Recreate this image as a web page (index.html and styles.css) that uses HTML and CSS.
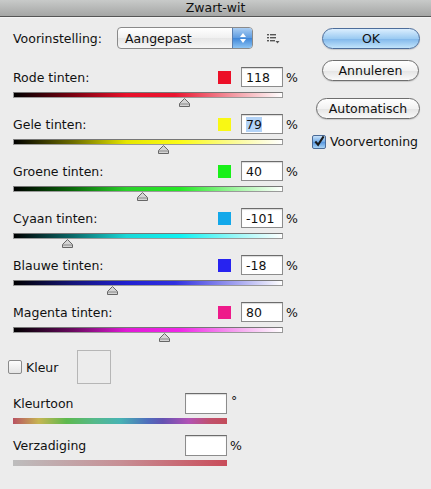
FILE: index.html
```html
<!DOCTYPE html>
<html lang="nl">
<head>
    <meta charset="UTF-8">
    <meta name="viewport" content="width=device-width, initial-scale=1.0">
    <title>Zwart-wit</title>
    <link rel="stylesheet" href="styles.css">
</head>
<body>

<div class="titlebar">Zwart-wit</div>

<div class="dialog">
    <div class="main">
        <div class="preset">
            <span class="preset-label">Voorinstelling:</span>
            <div class="select">
                <span class="select-text">Aangepast</span>
                <span class="stepper">
                    <svg width="8" height="12" viewBox="0 0 8 12"><path d="M4 1 L7 5 L1 5 Z M4 11 L7 7 L1 7 Z" fill="#fff"/></svg>
                </span>
            </div>
            <svg class="menu-icon" width="13" height="11" viewBox="0 0 13 11">
                <rect x="0" y="1" width="2" height="1.4" fill="#555"/>
                <rect x="3" y="1" width="6" height="1.4" fill="#555"/>
                <rect x="0" y="4" width="2" height="1.4" fill="#555"/>
                <rect x="3" y="4" width="6" height="1.4" fill="#555"/>
                <rect x="0" y="7" width="2" height="1.4" fill="#555"/>
                <rect x="3" y="7" width="5" height="1.4" fill="#555"/>
                <path d="M8.5 8 L12.5 8 L10.5 10.5 Z" fill="#555"/>
            </svg>
        </div>

        <!-- kleurkanalen -->
        <div class="tint">
            <div class="tint-head">
                <span class="tint-label">Rode tinten:</span>
                <span class="swatch red"></span>
                <span class="field">118</span>
                <span class="unit">%</span>
            </div>
            <div class="track">
                <div class="bar bar-red"></div>
                <svg class="thumb" style="left: 166px" width="11" height="9" viewBox="0 0 11 9"><path d="M0.5 8.5 L0.5 5.5 L5.5 0.5 L10.5 5.5 L10.5 8.5 Z" fill="#d4d4d4" stroke="#666"/><path d="M1 6 L10 6" stroke="#888"/></svg>
            </div>
        </div>
        <div class="tint">
            <div class="tint-head">
                <span class="tint-label">Gele tinten:</span>
                <span class="swatch yellow"></span>
                <span class="field"><span class="selected">79</span></span>
                <span class="unit">%</span>
            </div>
            <div class="track">
                <div class="bar bar-yellow"></div>
                <svg class="thumb" style="left: 145px" width="11" height="9" viewBox="0 0 11 9"><path d="M0.5 8.5 L0.5 5.5 L5.5 0.5 L10.5 5.5 L10.5 8.5 Z" fill="#d4d4d4" stroke="#666"/><path d="M1 6 L10 6" stroke="#888"/></svg>
            </div>
        </div>
        <div class="tint">
            <div class="tint-head">
                <span class="tint-label">Groene tinten:</span>
                <span class="swatch green"></span>
                <span class="field">40</span>
                <span class="unit">%</span>
            </div>
            <div class="track">
                <div class="bar bar-green"></div>
                <svg class="thumb" style="left: 124px" width="11" height="9" viewBox="0 0 11 9"><path d="M0.5 8.5 L0.5 5.5 L5.5 0.5 L10.5 5.5 L10.5 8.5 Z" fill="#d4d4d4" stroke="#666"/><path d="M1 6 L10 6" stroke="#888"/></svg>
            </div>
        </div>
        <div class="tint">
            <div class="tint-head">
                <span class="tint-label">Cyaan tinten:</span>
                <span class="swatch cyan"></span>
                <span class="field">-101</span>
                <span class="unit">%</span>
            </div>
            <div class="track">
                <div class="bar bar-cyan"></div>
                <svg class="thumb" style="left: 49px" width="11" height="9" viewBox="0 0 11 9"><path d="M0.5 8.5 L0.5 5.5 L5.5 0.5 L10.5 5.5 L10.5 8.5 Z" fill="#d4d4d4" stroke="#666"/><path d="M1 6 L10 6" stroke="#888"/></svg>
            </div>
        </div>
        <div class="tint">
            <div class="tint-head">
                <span class="tint-label">Blauwe tinten:</span>
                <span class="swatch blue"></span>
                <span class="field">-18</span>
                <span class="unit">%</span>
            </div>
            <div class="track">
                <div class="bar bar-blue"></div>
                <svg class="thumb" style="left: 94px" width="11" height="9" viewBox="0 0 11 9"><path d="M0.5 8.5 L0.5 5.5 L5.5 0.5 L10.5 5.5 L10.5 8.5 Z" fill="#d4d4d4" stroke="#666"/><path d="M1 6 L10 6" stroke="#888"/></svg>
            </div>
        </div>
        <div class="tint">
            <div class="tint-head">
                <span class="tint-label">Magenta tinten:</span>
                <span class="swatch magenta"></span>
                <span class="field">80</span>
                <span class="unit">%</span>
            </div>
            <div class="track">
                <div class="bar bar-magenta"></div>
                <svg class="thumb" style="left: 146px" width="11" height="9" viewBox="0 0 11 9"><path d="M0.5 8.5 L0.5 5.5 L5.5 0.5 L10.5 5.5 L10.5 8.5 Z" fill="#d4d4d4" stroke="#666"/><path d="M1 6 L10 6" stroke="#888"/></svg>
            </div>
        </div>

        <!-- kleur -->
        <div class="colorize">
            <span class="checkbox"></span>
            <span class="colorize-label">Kleur</span>
            <span class="color-box"></span>
        </div>
        <div class="tone">
            <div class="tone-head">
                <span class="tone-label">Kleurtoon</span>
                <span class="field tone-field"></span>
                <span class="degree">°</span>
            </div>
            <div class="bar bar-hue"></div>
        </div>
        <div class="tone">
            <div class="tone-head">
                <span class="tone-label">Verzadiging</span>
                <span class="field tone-field"></span>
                <span class="tone-unit">%</span>
            </div>
            <div class="bar bar-sat"></div>
        </div>
    </div>

    <div class="side">
        <button class="btn btn-default">OK</button>
        <button class="btn btn-cancel">Annuleren</button>
        <button class="btn btn-auto">Automatisch</button>
        <label class="preview">
            <span class="checkbox checked">
                <svg width="13" height="13" viewBox="0 0 13 13"><path d="M2.5 6.5 L5.5 10 L11.5 1" fill="none" stroke="#1a1a1a" stroke-width="2.2"/></svg>
            </span>
            Voorvertoning
        </label>
    </div>
</div>

</body>
</html>
```

FILE: styles.css
```css
body {
    font-family: "DejaVu Sans", "Lucida Grande", sans-serif;
    font-size: 12px;
    color: #111;
    margin: 0;
    padding: 0;
    background-color: #ececec;
    width: 431px;
    height: 489px;
    overflow: hidden;
}
.titlebar {
    height: 16px;
    line-height: 15px;
    text-align: center;
    font-size: 12.5px;
    color: #111;
    background: linear-gradient(#c8cac9, #a5a6a5);
    border-bottom: 1px solid #555;
    box-shadow: 0 1px 0 #f4f4f4;
}
.dialog {
    display: flex;
    padding: 10px 11px 0 13px;
}
.main {
    width: 282px;
}
.preset {
    display: flex;
    align-items: center;
    height: 22px;
    margin-bottom: 18px;
}
.preset-label {
    width: 104px;
    font-size: 12.5px;
}
.select {
    display: flex;
    align-items: center;
    width: 134px;
    height: 20px;
    border: 1px solid #8a8a8a;
    border-radius: 4px;
    background: linear-gradient(#ffffff, #f0f0f0 50%, #e6e6e6 51%, #f6f6f6);
    overflow: hidden;
}
.select-text {
    flex: 1;
    padding-left: 7px;
    font-size: 12.5px;
}
.stepper {
    display: flex;
    align-items: center;
    justify-content: center;
    width: 19px;
    height: 20px;
    border-left: 1px solid #5a7fb0;
    background: linear-gradient(#a9cdf3, #5d9be0 50%, #3f86d8 51%, #8cc4f4);
}
.menu-icon {
    margin-left: 14px;
}
.tint {
    height: 47px;
}
.tint-head,
.tone-head {
    display: flex;
    align-items: center;
    height: 20px;
}
.tint-label,
.tone-label {
    flex: 1;
    font-size: 12.5px;
}
.swatch {
    width: 13px;
    height: 13px;
    margin-right: 10px;
}
.red { background: #ec0f27; }
.yellow { background: #f9f814; }
.green { background: #18f018; }
.cyan { background: #13a8ea; }
.blue { background: #2723f0; }
.magenta { background: #ee1a8a; }
.field {
    box-sizing: border-box;
    width: 42px;
    height: 20px;
    padding: 2px 4px 0;
    background: #fff;
    border: 1px solid #8c8c8c;
    border-top-color: #6c6c6c;
    box-shadow: inset 0 1px 1px rgba(0, 0, 0, 0.15);
    font-size: 12.5px;
    line-height: 16px;
}
.selected {
    background: #b3d3f7;
}
.unit {
    width: 9px;
    margin-left: 3px;
    font-size: 12.5px;
}
.track {
    position: relative;
    margin-top: 5px;
}
.bar {
    box-sizing: border-box;
    width: 270px;
    height: 6px;
    border: 1px solid #9a9a9a;
    border-top-color: #777;
}
.thumb {
    position: absolute;
    top: 6px;
}
.bar-red { background: linear-gradient(to right, #000, #7a0010 22%, #e8102a 42%, #ea1530 60%, #f39aa3 82%, #fff); }
.bar-yellow { background: linear-gradient(to right, #000, #6c6c00 22%, #e6e600 42%, #fbfb18 62%, #fbfba0 84%, #fff); }
.bar-green { background: linear-gradient(to right, #000, #0a6a0a 22%, #2ad02a 42%, #26e826 62%, #a8f6a8 84%, #fff); }
.bar-cyan { background: linear-gradient(to right, #000, #0a6a6a 22%, #19d8d8 42%, #10f2f2 62%, #a0f8f8 84%, #fff); }
.bar-blue { background: linear-gradient(to right, #000, #14147a 22%, #2020d0 42%, #3030e0 60%, #a8a8f0 84%, #fff); }
.bar-magenta { background: linear-gradient(to right, #000, #6a0a60 22%, #e01ad6 42%, #f028e8 62%, #f6a8f0 84%, #fff); }
.colorize {
    display: flex;
    align-items: center;
    height: 34px;
    margin: 1px 0 9px -5px;
}
.checkbox {
    display: inline-flex;
    align-items: center;
    justify-content: center;
    box-sizing: border-box;
    width: 14px;
    height: 14px;
    border: 1px solid #8a8a8a;
    border-radius: 2px;
    background: linear-gradient(#fdfdfd, #e4e4e4);
}
.colorize-label {
    margin-left: 4px;
    width: 51px;
    font-size: 12.5px;
}
.color-box {
    box-sizing: border-box;
    width: 34px;
    height: 34px;
    border: 1px solid #b6b6b6;
    background: #ececec;
}
.tone {
    width: 228px;
    margin-bottom: 11px;
}
.tone .bar {
    width: 214px;
    height: 6px;
    margin-top: 5px;
    border: none;
}
.tone-field {
    width: 42px;
    height: 21px;
}
.degree {
    width: 10px;
    margin-left: 4px;
    margin-top: -6px;
    font-size: 12.5px;
}
.tone-unit {
    width: 11px;
    margin-left: 3px;
    font-size: 12.5px;
}
.bar-hue { background: linear-gradient(to right, #b95262, #c6b552 12%, #5db94e 25%, #55b98a 38%, #47b3b3 50%, #4f6dbc 63%, #6452b2 70%, #b152b5 82%, #c0506c 92%, #c34c5a); }
.bar-sat { background: linear-gradient(to right, #bdbdbd, #c78f95 50%, #c94c5a); }
.side {
    display: flex;
    flex-direction: column;
    align-items: flex-end;
    margin-left: auto;
    width: 108px;
    padding-top: 1px;
}
.btn {
    box-sizing: border-box;
    height: 21px;
    padding: 0;
    border: 1px solid #6e6e6e;
    border-radius: 11px;
    font-family: "DejaVu Sans", "Lucida Grande", sans-serif;
    font-size: 12.5px;
    color: #111;
    background: linear-gradient(#ffffff, #f2f2f2 50%, #e4e4e4 51%, #fafafa);
    box-shadow: 0 1px 1px rgba(0, 0, 0, 0.15);
}
.btn-default {
    width: 98px;
    border-color: #4d6d9a;
    background: linear-gradient(#dbeefe, #9ccbf2 50%, #7fb6ea 51%, #c2e4fb);
}
.btn-cancel {
    width: 97px;
    margin-top: 11px;
    margin-right: 1px;
}
.btn-auto {
    width: 104px;
    margin-top: 17px;
}
.preview {
    display: flex;
    align-items: center;
    gap: 4px;
    align-self: flex-start;
    margin-top: 15px;
    font-size: 12.5px;
}
.checkbox.checked {
    border-color: #4a6a96;
    background: linear-gradient(#c8e2fa, #6fa9e6 50%, #5596e0 51%, #a9d4f6);
}
```
